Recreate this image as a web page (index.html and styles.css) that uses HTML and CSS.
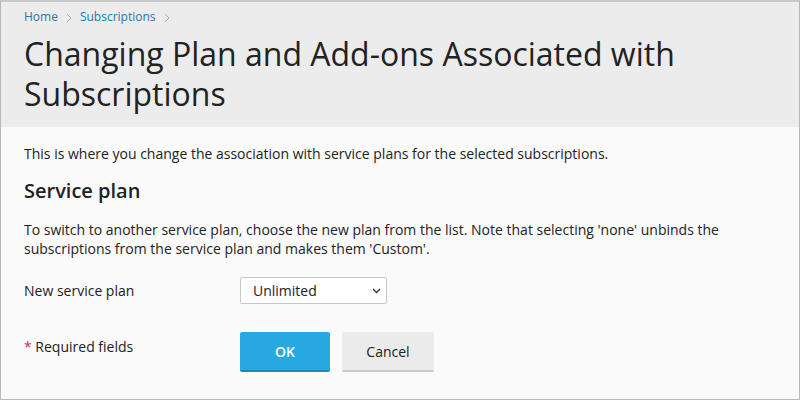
FILE: index.html
```html
<!DOCTYPE html>
<html lang="en">
<head>
  <meta charset="UTF-8">
  <title>Changing Plan and Add-ons Associated with Subscriptions</title>
  <link rel="stylesheet" href="styles.css">
</head>
<body>
  <div class="frame">
    <header class="page-header">
      <nav class="breadcrumbs">
        <a href="#">Home</a>
        <svg class="sep" width="6" height="10" viewBox="0 0 6 10"><path d="M1 1l4 4-4 4" fill="none" stroke="#a8a8a8" stroke-width="1"/></svg>
        <a href="#">Subscriptions</a>
        <svg class="sep" width="6" height="10" viewBox="0 0 6 10"><path d="M1 1l4 4-4 4" fill="none" stroke="#a8a8a8" stroke-width="1"/></svg>
      </nav>
      <h1>Changing Plan and Add-ons Associated with Subscriptions</h1>
    </header>

    <main class="content">
      <p class="intro">This is where you change the association with service plans for the selected subscriptions.</p>
      <h2>Service plan</h2>
      <p class="hint">To switch to another service plan, choose the new plan from the list. Note that selecting 'none' unbinds the subscriptions from the service plan and makes them 'Custom'.</p>

      <div class="form-row">
        <label for="plan">New service plan</label>
        <div class="select-wrap">
          <select id="plan">
            <option>Unlimited</option>
          </select>
          <svg class="caret" width="9" height="6" viewBox="0 0 9 6"><path d="M1 1l3.5 3.5L8 1" fill="none" stroke="#333" stroke-width="1.3"/></svg>
        </div>
      </div>

      <div class="form-row actions">
        <div class="required"><span class="star">*</span> Required fields</div>
        <div class="buttons">
          <button class="btn btn-primary">OK</button>
          <button class="btn">Cancel</button>
        </div>
      </div>
    </main>
  </div>
</body>
</html>
```

FILE: styles.css
```css
* {
  box-sizing: border-box;
}

body {
  margin: 0;
  font-family: "Open Sans", sans-serif;
  color: #222;
}

.frame {
  height: 400px;
  border: 1px solid #b8b8b8;
  border-top: 2px solid #c8c8c8;
  background-color: #fafafa;
  overflow: hidden;
}

.page-header {
  background-color: #ececec;
  padding: 6px 23px 13px;
}

.breadcrumbs {
  display: flex;
  align-items: center;
  gap: 8px;
  font-size: 12px;
  line-height: 18px;
}

.breadcrumbs a {
  color: #1a7bb0;
  text-decoration: none;
}

.sep {
  margin-top: 1px;
}

h1 {
  margin: 8px 0 0;
  font-size: 32px;
  font-weight: 400;
  line-height: 40px;
  color: #222;
}

.content {
  padding: 17px 23px;
}

.intro {
  margin: 0 0 13px;
  font-size: 14px;
  line-height: 20px;
}

h2 {
  margin: 0 0 15px;
  font-size: 20px;
  font-weight: 600;
  line-height: 28px;
}

.hint {
  margin: 0 0 19px;
  font-size: 14px;
  line-height: 19px;
}

.form-row {
  display: flex;
  align-items: center;
  font-size: 14px;
  line-height: 20px;
}

.form-row label {
  width: 216px;
}

.select-wrap {
  position: relative;
}

select {
  appearance: none;
  display: block;
  width: 147px;
  height: 27px;
  padding: 0 12px;
  font-family: "Open Sans", sans-serif;
  font-size: 14px;
  color: #222;
  background: #fff;
  border: 1px solid #c7c7c7;
  border-radius: 2px;
}

.caret {
  position: absolute;
  right: 6px;
  top: 11px;
}

.actions {
  align-items: flex-start;
  margin-top: 28px;
}

.required {
  width: 216px;
  padding-top: 5px;
}

.star {
  color: #d02f4f;
}

.buttons {
  display: flex;
  gap: 12px;
}

.btn {
  height: 40px;
  width: 92px;
  font-family: "Open Sans", sans-serif;
  font-size: 14px;
  color: #222;
  background: #ebebeb;
  border: none;
  border-bottom: 2px solid #c9c9c9;
  border-radius: 2px;
}

.btn-primary {
  width: 90px;
  font-weight: 600;
  color: #fff;
  background: #28a8e0;
  border-bottom-color: #1b88ba;
}
```
